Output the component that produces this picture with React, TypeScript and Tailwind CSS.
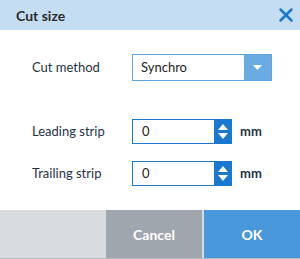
import { X } from "lucide-react";

function Spinner() {
  return (
    <div className="flex w-[17px] flex-col items-center justify-center gap-[3px] bg-[#1b78d0]">
      <svg width="10" height="6" viewBox="0 0 10 6">
        <path d="M0 6 L5 0 L10 6 Z" fill="#fff" />
      </svg>
      <svg width="10" height="6" viewBox="0 0 10 6">
        <path d="M0 0 L5 6 L10 0 Z" fill="#fff" />
      </svg>
    </div>
  );
}

function NumberRow({ label }: { label: string }) {
  return (
    <div className="flex items-center">
      <span className="w-[100px] text-[13px] text-[#1f3347]">{label}</span>
      <div className="flex h-[25px] w-[100px] border border-[#1b78d0] bg-white">
        <span className="flex-1 pl-[9px] text-[13px] leading-[23px] text-[#222]">0</span>
        <Spinner />
      </div>
      <span className="ml-[8px] text-[13px] font-bold text-[#1f3347]">mm</span>
    </div>
  );
}

export default function App() {
  return (
    <div className="flex h-[259px] w-[300px] flex-col bg-white" style={{ fontFamily: 'Lato, "Noto Sans", sans-serif' }}>
      <div className="flex h-[30px] items-center justify-between bg-[#c5ddf2] pl-[16px] pr-[3px]">
        <span className="text-[14px] font-bold text-[#2b2b2b]">Cut size</span>
        <X size={22} strokeWidth={2.7} className="text-[#1b78d0]" />
      </div>
      <div className="flex flex-1 flex-col pl-[32px] pt-[24px]">
        <div className="flex items-center">
          <span className="w-[100px] text-[13px] text-[#1f3347]">Cut method</span>
          <div className="flex h-[27px] w-[140px] border border-[#5ea6e2] bg-white">
            <span className="flex-1 pl-[8px] text-[13px] leading-[25px] text-[#222]">Synchro</span>
            <div className="flex w-[27px] items-center justify-center bg-[#6aabe4]">
              <svg width="9" height="5" viewBox="0 0 9 5">
                <path d="M0 0 L4.5 5 L9 0 Z" fill="#fff" />
              </svg>
            </div>
          </div>
        </div>
        <div className="mt-[38px] flex flex-col gap-[17px]">
          <NumberRow label="Leading strip" />
          <NumberRow label="Trailing strip" />
        </div>
      </div>
      <div className="flex h-[49px] border-b border-[#b8bcc0]">
        <div className="w-[106px] bg-[#d8dcdf]" />
        <button className="flex w-[96px] items-center justify-center bg-[#a0a6ae] text-[14px] font-bold text-white">Cancel</button>
        <div className="w-[2px] bg-[#d8dcdf]" />
        <button className="flex flex-1 items-center justify-center bg-[#4a98dc] text-[14px] font-bold text-white">OK</button>
      </div>
    </div>
  );
}
